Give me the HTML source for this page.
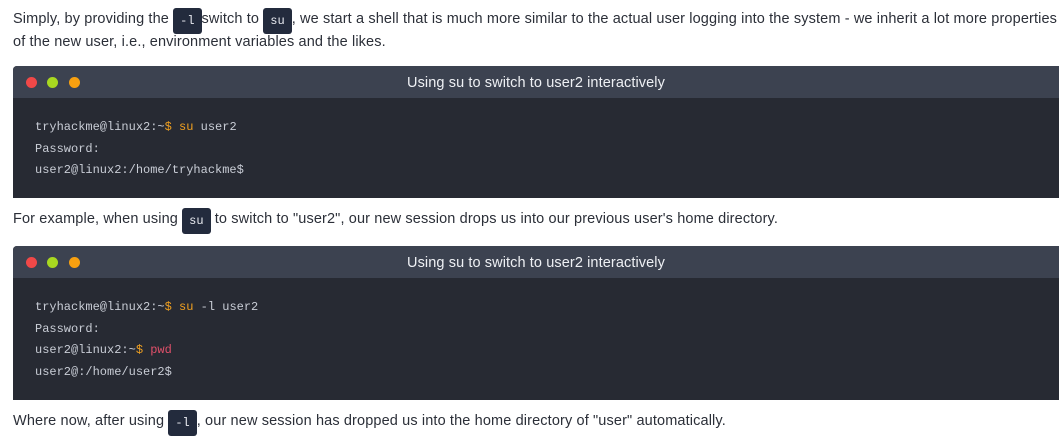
<!DOCTYPE html>
<html><head><meta charset="utf-8"><style>
body{margin:0;width:1059px;height:443px;overflow:hidden;background:#fff;font-family:"Liberation Sans",sans-serif;color:#2b2f38;position:relative}
.p{position:absolute;left:13px;font-size:14.5px;letter-spacing:0.13px;white-space:nowrap;line-height:23px}
code{font-family:"Liberation Mono",monospace;font-size:12px;letter-spacing:0;background:#232b3d;color:#e8eaf0;border-radius:3px;padding:5px 7px;display:inline-block;line-height:16px;vertical-align:-1px}
.term{position:absolute;left:13px;width:1046px;background:#272a33;border-radius:4px 0 0 0}
.bar{height:32px;background:#3c4250;position:relative;border-radius:4px 0 0 0}
.bar .t{position:absolute;left:0;right:0;text-align:center;top:1px;line-height:32px;color:#eef0f4;font-size:14.5px;letter-spacing:0.1px}
.dot{position:absolute;top:11px;width:11px;height:11px;border-radius:50%}
.body{padding:19px 0 0 22px;font-family:"Liberation Mono",monospace;font-size:12px;color:#c9cdd6;line-height:21.5px}
.o{color:#f0a020}.r{color:#e0506a}
</style></head><body>
<div class="p" style="top:8px">Simply, by providing the <code>-l</code>switch to <code>su</code>, we start a shell that is much more similar to the actual user logging into the system - we inherit a lot more properties</div>
<div class="p" style="top:31px">of the new user, i.e., environment variables and the likes.</div>
<div class="term" style="top:66px;height:132px">
<div class="bar"><span class="dot" style="left:13px;background:#f04848"></span><span class="dot" style="left:34px;background:#a8d820"></span><span class="dot" style="left:56px;background:#f8a010"></span><div class="t">Using su to switch to user2 interactively</div></div>
<div class="body">tryhackme@linux2:~<span class="o">$ su</span> user2<br>Password:<br>user2@linux2:/home/tryhackme$</div>
</div>
<div class="p" style="top:208px">For example, when using <code>su</code> to switch to "user2", our new session drops us into our previous user's home directory.</div>
<div class="term" style="top:246px;height:154px">
<div class="bar"><span class="dot" style="left:13px;background:#f04848"></span><span class="dot" style="left:34px;background:#a8d820"></span><span class="dot" style="left:56px;background:#f8a010"></span><div class="t">Using su to switch to user2 interactively</div></div>
<div class="body">tryhackme@linux2:~<span class="o">$ su</span> -l user2<br>Password:<br>user2@linux2:~<span class="o">$</span> <span class="r">pwd</span><br>user2@:/home/user2$</div>
</div>
<div class="p" style="top:410px">Where now, after using <code>-l</code>, our new session has dropped us into the home directory of "user" automatically.</div>
</body></html>
